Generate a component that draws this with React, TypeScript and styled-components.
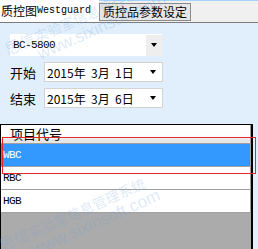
import React from 'react'
import styled, { createGlobalStyle } from 'styled-components'

const GlobalStyle = createGlobalStyle`
  html, body {
    margin: 0px;
    padding: 0px;
    background: #e1effd;
  }

  body {
    font-family: "Noto Sans CJK SC", "Liberation Sans", sans-serif;
  }
`

const Page = styled.div`
  position: relative;
  width: 258px;
  height: 249px;
  overflow: hidden;
  display: flex;
  flex-direction: column;
  background: #e1effd;
`

const TabStrip = styled.nav`
  height: 21px;
  display: flex;
  align-items: flex-start;
  background: #f0f0f0;
  border-top: 1px solid #a6d2ff;
  border-bottom: 1px solid #7c7c7c;
`

const Tab = styled.div<{ $active?: boolean }>`
  box-sizing: border-box;
  display: flex;
  align-items: center;
  font-size: 12px;
  line-height: 14px;
  color: #000000;
  white-space: nowrap;
  ${({ $active }) => $active ? `
    height: 22px;
    min-width: 99px;
    margin-top: -1px;
    padding: 0px 5px 0px 1px;
    background: #ffffff;
  ` : `
    height: 18px;
    margin-top: 2px;
    padding: 0px 3px 0px 3px;
    background: #e6e6e6;
    border: 1px solid #8a8a8a;
  `}
`

const Mono = styled.span`
  font-family: "Liberation Mono", monospace;
  font-size: 10px;
`

const Form = styled.section`
  display: flex;
  flex-direction: column;
  gap: 6px;
  padding: 11px 0px 0px 10px;
`

const Combo = styled.div`
  width: 152px;
  height: 22px;
  display: flex;
  align-items: center;
  background: #ffffff;
`

const ComboText = styled.span`
  flex: 1;
  padding-left: 3px;
  font-family: "Liberation Mono", monospace;
  font-size: 11px;
  letter-spacing: -0.6px;
  color: #000000;
`

const ArrowButton = styled.span`
  width: 16px;
  height: 21px;
  display: flex;
  align-items: center;
  justify-content: center;
  background: #eeeeee;
`

const Arrow = styled.span`
  width: 0px;
  height: 0px;
  border-left: 3.5px solid transparent;
  border-right: 3.5px solid transparent;
  border-top: 4px solid #000000;
`

const DateRow = styled.div`
  display: flex;
  align-items: center;
`

const Label = styled.label`
  width: 34px;
  font-size: 13px;
  color: #000000;
`

const DateBox = styled.div`
  box-sizing: border-box;
  width: 119px;
  height: 20px;
  display: flex;
  align-items: center;
  justify-content: space-between;
  padding: 0px 6px 0px 2px;
  background: #ffffff;
  border: 1px solid #d2d2d2;
  font-size: 12px;
  color: #000000;
  white-space: pre;
`

const List = styled.section`
  flex: 1;
  display: flex;
  flex-direction: column;
  width: 250px;
  margin-top: 16px;
  border-top: 1px solid #000000;
  border-left: 1px solid #000000;
  border-right: 2px solid #000000;
  background: #ababab;
`

const Header = styled.div`
  height: 18px;
  display: flex;
  align-items: flex-start;
  padding-left: 9px;
  font-size: 13px;
  line-height: 17px;
  color: #000000;
  background: linear-gradient(#ffffff 0px, #fbfbfb 13px, #e6e6e6 14px, #e6e6e6 17px);
  border-right: 1px solid #a0a0a0;
  border-bottom: 1px solid #a0a0a0;
  overflow: hidden;
`

const Row = styled.div<{ $selected?: boolean }>`
  height: 22px;
  display: flex;
  align-items: center;
  padding-left: 2px;
  font-family: "Liberation Mono", monospace;
  font-size: 11px;
  letter-spacing: -0.6px;
  color: ${({ $selected }) => $selected ? '#ffffff' : '#000000'};
  background: ${({ $selected }) => $selected ? '#3399ff' : '#ffffff'};
  border-right: 1px solid #a0a0a0;
  border-bottom: 1px solid #a0a0a0;
`

/* red annotation frame drawn over the selected row */
const Highlight = styled.svg`
  position: absolute;
  z-index: 2;
  left: 2px;
  top: 137px;
  pointer-events: none;
`

const Watermark = styled.div<{ $left: number; $top: number }>`
  position: absolute;
  z-index: 1;
  left: ${({ $left }) => $left}px;
  top: ${({ $top }) => $top}px;
  transform: rotate(-24deg);
  transform-origin: left top;
  color: rgba(110, 160, 220, 0.24);
  font-size: 14px;
  line-height: 17px;
  white-space: nowrap;
  pointer-events: none;
`

const WatermarkBrand = styled.span`
  font-size: 16px;
`

const WatermarkUrl = styled.div`
  padding-left: 28px;
  font-family: "Liberation Sans", sans-serif;
  font-size: 17px;
`

const rows = ['WBC', 'RBC', 'HGB']

const Stamp = ({ left, top }: { left: number; top: number }): React.ReactElement => (
  <Watermark $left={left} $top={top}>
    <div><WatermarkBrand>思信</WatermarkBrand>实验室信息管理系统</div>
    <WatermarkUrl>www.sixinsoft.com</WatermarkUrl>
  </Watermark>
)

const App = (): React.ReactElement => {
  return (
    <Page>
      <GlobalStyle />
      <TabStrip>
        <Tab $active>质控图<Mono>Westguard</Mono></Tab>
        <Tab>质控品参数设定</Tab>
      </TabStrip>
      <Form>
        <Combo>
          <ComboText>BC-5800</ComboText>
          <ArrowButton><Arrow /></ArrowButton>
        </Combo>
        <DateRow>
          <Label>开始</Label>
          <DateBox>2015年  3月  1日<Arrow /></DateBox>
        </DateRow>
        <DateRow>
          <Label>结束</Label>
          <DateBox>2015年  3月  6日<Arrow /></DateBox>
        </DateRow>
      </Form>
      <List>
        <Header>项目代号</Header>
        {rows.map((name, i) => <Row key={name} $selected={i === 0}>{name}</Row>)}
      </List>
      <Highlight width="254" height="37" viewBox="0 0 254 37">
        <rect x="0.5" y="0.5" width="253" height="36" fill="none" stroke="#e5262b" strokeWidth="1" />
      </Highlight>
      <Stamp left={2} top={42} />
      <Stamp left={-4} top={238} />
    </Page>
  )
}

export default App
